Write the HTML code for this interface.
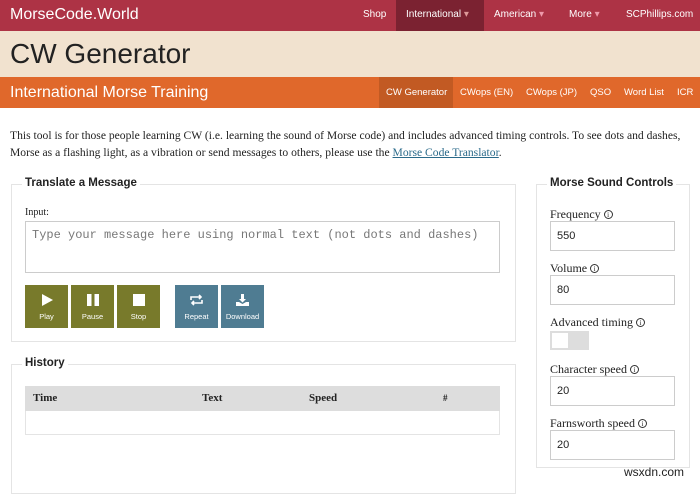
<!DOCTYPE html><html><head><style>
*{box-sizing:border-box;margin:0;padding:0}
body{width:700px;height:484px;overflow:hidden;background:#fff;font-family:"Liberation Serif",serif;color:#222;position:relative}
.a{position:absolute}
.s{font-family:"Liberation Sans",sans-serif}
.nav{top:0;left:0;width:700px;height:31px;background:#ad3345}
.nav span{position:absolute;top:9px;font-size:10px;color:#fff;font-family:"Liberation Sans",sans-serif}
.ob span{position:absolute;top:87px;font-size:9.5px;color:#fff;font-family:"Liberation Sans",sans-serif}
.fs{border:1px solid #e4e4e4}
.lg{background:#fff;font-family:"Liberation Sans",sans-serif;font-weight:bold;font-size:11.5px;padding:0 3px;color:#222}
.lb{font-size:12px;color:#222}
.in{border:1px solid #ccc;background:#fff;font-family:"Liberation Sans",sans-serif;font-size:11px;padding:8px 0 0 6px;height:30px;width:125px;left:550px}
.bt{top:285px;width:43px;height:43px;color:#fff;font-family:"Liberation Sans",sans-serif;font-size:7.5px;text-align:center}
.bt svg{display:block;margin:9px auto 6px}
.ol{background:#787a2b}.bl{background:#4f7c92}
.i{display:inline-block;width:9px;height:9px;border:1px solid #333;border-radius:50%;font-size:7px;text-align:center;line-height:8px;font-family:"Liberation Serif";vertical-align:1px;margin-left:3px}
</style></head><body>
<div class="a nav"></div>
<div class="a" style="left:396px;top:0;width:88px;height:31px;background:#7b2231"></div>
<div class="a s" style="left:10px;top:6px;font-size:16px;color:#fff">MorseCode.World</div>
<div class="nav a" style="background:none"><span style="left:363px">Shop</span><span style="left:406px">International <span style="position:static;color:#d99">▾</span></span><span style="left:494px">American <span style="position:static;color:#e9a">▾</span></span><span style="left:569px">More <span style="position:static;color:#e9a">▾</span></span><span style="left:626px">SCPhillips.com</span></div>
<div class="a" style="top:31px;left:0;width:700px;height:46px;background:#f1e2cf"></div>
<div class="a s" style="left:10px;top:38px;font-size:28px;color:#222">CW Generator</div>
<div class="a" style="top:77px;left:0;width:700px;height:31px;background:#e0682b"></div>
<div class="a" style="top:77px;left:379px;width:74px;height:31px;background:#c25a23"></div>
<div class="a s" style="left:10px;top:84px;font-size:16px;color:#fff">International Morse Training</div>
<div class="ob"><span style="left:386px">CW Generator</span><span style="left:460px">CWops (EN)</span><span style="left:526px">CWops (JP)</span><span style="left:590px">QSO</span><span style="left:624px">Word List</span><span style="left:677px">ICR</span></div>
<div class="a" style="left:10px;top:127px;width:685px;font-size:11.6px;line-height:17px;color:#222">This tool is for those people learning CW (i.e. learning the sound of Morse code) and includes advanced timing controls. To see dots and dashes, Morse as a flashing light, as a vibration or send messages to others, please use the <span style="color:#2a6a8a;text-decoration:underline">Morse Code Translator</span>.</div>
<div class="a fs" style="left:11px;top:184px;width:505px;height:158px"></div>
<div class="a lg" style="left:22px;top:177px">Translate a Message</div>
<div class="a" style="left:25px;top:207px;font-size:10px">Input:</div>
<div class="a" style="left:25px;top:221px;width:475px;height:52px;border:1px solid #ccc;font-family:'Liberation Mono',monospace;font-size:12px;color:#777;padding:6px 6px">Type your message here using normal text (not dots and dashes)</div>
<div class="a bt ol" style="left:25px"><svg width="12" height="12"><path d="M1 0L12 6L1 12Z" fill="#fff"/></svg>Play</div>
<div class="a bt ol" style="left:71px"><svg width="12" height="12"><rect x="0" y="0" width="4.5" height="12" fill="#fff"/><rect x="7.5" y="0" width="4.5" height="12" fill="#fff"/></svg>Pause</div>
<div class="a bt ol" style="left:117px"><svg width="12" height="12"><rect width="12" height="12" fill="#fff"/></svg>Stop</div>
<div class="a bt bl" style="left:175px"><svg width="13" height="12" fill="none" stroke="#fff" stroke-width="1.6"><path d="M1 6V3H11M9 1L11 3L9 5M12 6V9H2M4 7L2 9L4 11"/></svg>Repeat</div>
<div class="a bt bl" style="left:221px"><svg width="13" height="12"><path d="M5 0H8V5H10L6.5 8.5L3 5H5Z M0 8H3L6.5 10L10 8H13V12H0Z" fill="#fff"/></svg>Download</div>
<div class="a fs" style="left:11px;top:364px;width:505px;height:130px"></div>
<div class="a lg" style="left:22px;top:357px">History</div>
<div class="a" style="left:25px;top:386px;width:475px;height:49px;border:1px solid #e4e4e4"></div>
<div class="a" style="left:25px;top:386px;width:475px;height:25px;background:#ddd;font-weight:bold;font-size:11px"><span class="a" style="left:8px;top:6px">Time</span><span class="a" style="left:177px;top:6px">Text</span><span class="a" style="left:284px;top:6px">Speed</span><span class="a" style="left:418px;top:7px;font-size:9px">#</span></div>
<div class="a fs" style="left:536px;top:184px;width:154px;height:284px"></div>
<div class="a lg" style="left:547px;top:177px">Morse Sound Controls</div>
<div class="a lb" style="left:550px;top:207px">Frequency<span class="i">i</span></div>
<div class="a in" style="top:221px">550</div>
<div class="a lb" style="left:550px;top:261px">Volume<span class="i">i</span></div>
<div class="a in" style="top:275px">80</div>
<div class="a lb" style="left:550px;top:315px">Advanced timing<span class="i">i</span></div>
<div class="a" style="left:550px;top:331px;width:39px;height:19px;background:#ddd"><div style="position:absolute;left:2px;top:2px;width:16px;height:15px;background:#fff"></div></div>
<div class="a lb" style="left:550px;top:362px">Character speed<span class="i">i</span></div>
<div class="a in" style="top:376px">20</div>
<div class="a lb" style="left:550px;top:416px">Farnsworth speed<span class="i">i</span></div>
<div class="a in" style="top:430px">20</div>
<div class="a s" style="left:624px;top:465px;font-size:12px;color:#222">wsxdn.com</div>
</body></html>
